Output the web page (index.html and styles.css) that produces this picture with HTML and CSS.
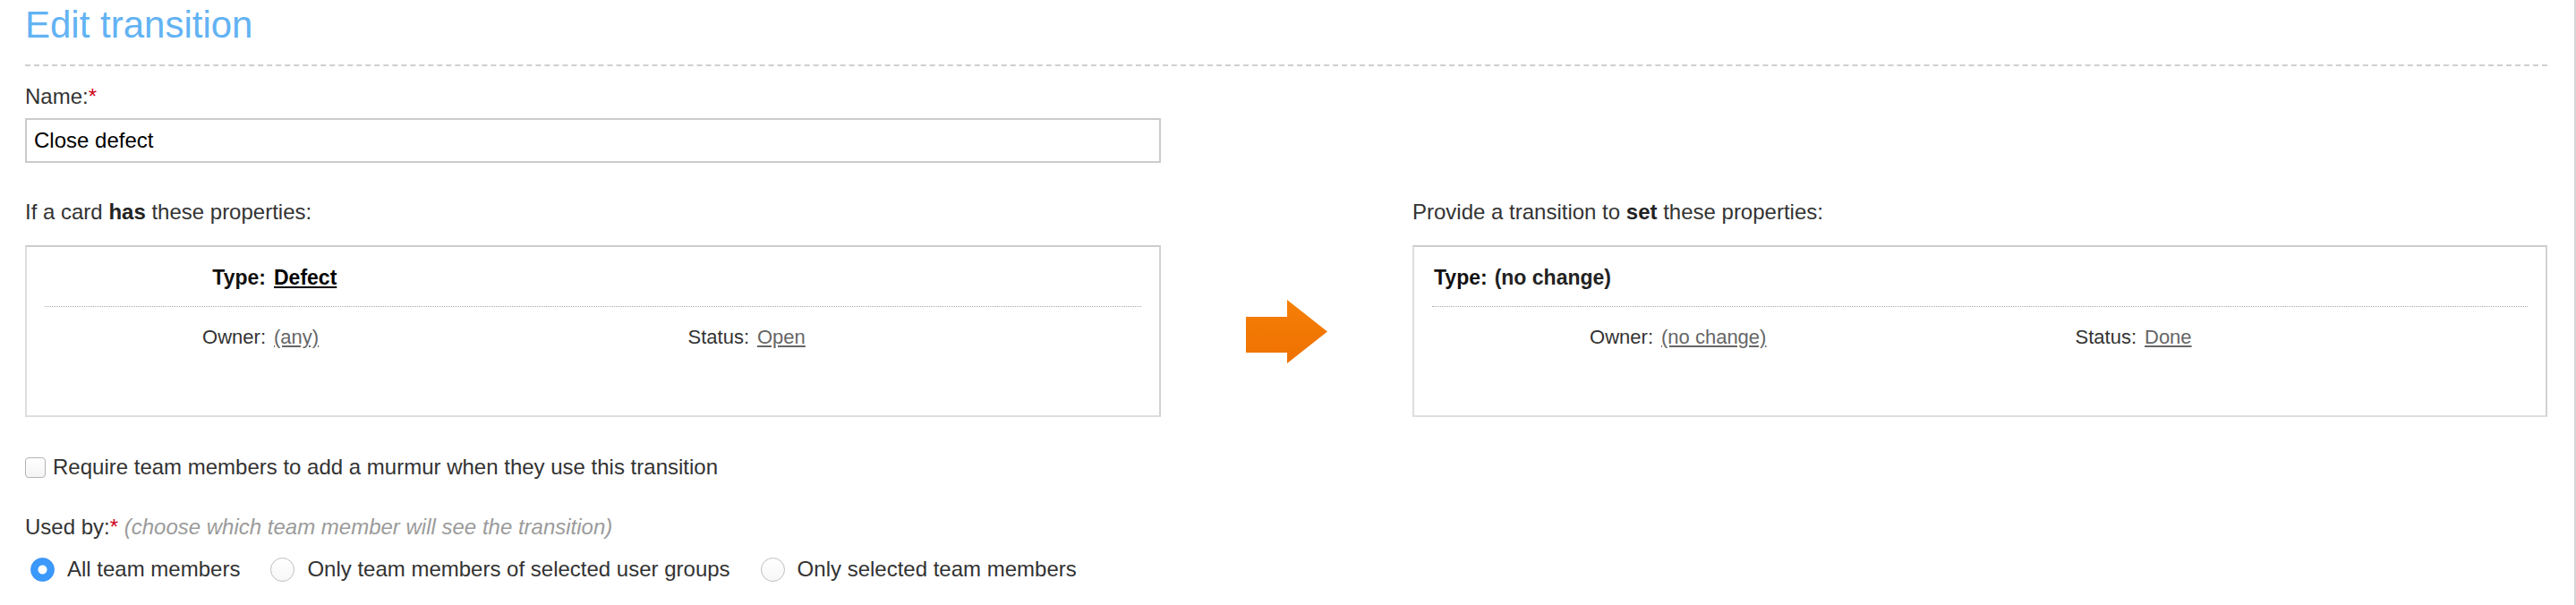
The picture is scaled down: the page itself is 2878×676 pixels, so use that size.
FILE: index.html
```html
<!DOCTYPE html>
<html lang="en">
<head>
<meta charset="utf-8">
<title>Edit transition</title>
<link rel="stylesheet" href="styles.css">
</head>
<body>
<div class="page">
  <h1 class="title">Edit transition</h1>
  <div class="rule"></div>

  <label class="field-label" for="name">Name:<span class="req">*</span></label>
  <input id="name" class="text-input" type="text" value="Close defect">

  <div class="transition">
    <div class="heading">If a card <b>has</b> these properties:</div>
    <div class="spacer"></div>
    <div class="heading">Provide a transition to <b>set</b> these properties:</div>

    <div class="props">
      <div class="prop-grid type-row">
        <span class="plabel type-label">Type:</span>
        <a class="type-value" href="#">Defect</a>
      </div>
      <div class="divider"></div>
      <div class="prop-grid prop-row">
        <span class="plabel">Owner:</span>
        <a class="pvalue" href="#">(any)</a>
        <span class="plabel">Status:</span>
        <a class="pvalue" href="#">Open</a>
      </div>
    </div>

    <div class="arrow">
      <svg width="91" height="71" viewBox="0 0 91 71" aria-hidden="true">
        <defs>
          <linearGradient id="ag" x1="0" y1="0" x2="0" y2="1">
            <stop offset="0" stop-color="#f67f08"/>
            <stop offset="1" stop-color="#ee7100"/>
          </linearGradient>
        </defs>
        <polygon points="0,19 46,19 46,0 91,35.5 46,71 46,59 0,59" fill="url(#ag)"/>
      </svg>
    </div>

    <div class="props">
      <div class="type-row type-row-to">
        <span class="type-label">Type:</span>
        <span class="type-none">(no change)</span>
      </div>
      <div class="divider"></div>
      <div class="prop-grid prop-row">
        <span class="plabel">Owner:</span>
        <a class="pvalue" href="#">(no change)</a>
        <span class="plabel">Status:</span>
        <a class="pvalue" href="#">Done</a>
      </div>
    </div>
  </div>

  <label class="check-row">
    <input class="checkbox" type="checkbox">
    <span>Require team members to add a murmur when they use this transition</span>
  </label>

  <div class="used-by">Used by:<span class="req">*</span> <span class="hint">(choose which team member will see the transition)</span></div>

  <div class="radio-row">
    <label class="radio-item"><input class="radio" type="radio" name="usedby" checked><span>All team members</span></label>
    <label class="radio-item"><input class="radio" type="radio" name="usedby"><span>Only team members of selected user groups</span></label>
    <label class="radio-item"><input class="radio" type="radio" name="usedby"><span>Only selected team members</span></label>
  </div>
</div>
</body>
</html>
```
FILE: styles.css
```css
html, body {
  margin: 0;
  padding: 0;
  background: #fff;
}

body {
  font-family: "Liberation Sans", Arial, Helvetica, sans-serif;
  color: #333;
}

.page {
  box-sizing: border-box;
  min-height: 676px;
  padding: 4px 30px 0 28px;
  border-right: 2px solid #d6d6d6;
}

.title {
  margin: 0;
  font-size: 42px;
  line-height: 48px;
  font-weight: 300;
  color: #62b3f3;
}

.rule {
  margin-top: 20px;
  border-top: 2px dashed #cfcfcf;
}

.field-label {
  display: block;
  margin-top: 20px;
  font-size: 24px;
  line-height: 28px;
  color: #333;
}

.req {
  color: #d0021b;
}

.text-input {
  display: block;
  box-sizing: border-box;
  margin: 10px 0 0 0;
  width: 1269px;
  height: 50px;
  padding: 0 8px;
  border: 2px solid #cbcbcb;
  border-radius: 0;
  font-family: "Liberation Sans", Arial, Helvetica, sans-serif;
  font-size: 24px;
  color: #000;
  outline: none;
  background: #fff;
}

.transition {
  margin-top: 41px;
  display: grid;
  grid-template-columns: 1269px 281px 1fr;
  row-gap: 23px;
}

.heading {
  font-size: 24px;
  line-height: 28px;
  color: #333;
}

.heading b {
  color: #222;
}

.props {
  box-sizing: border-box;
  height: 192px;
  padding: 20px 20px 0 20px;
  border: 2px solid #dedede;
  border-top-color: #cccccc;
  border-right-color: #d2d2d2;
}

.prop-grid {
  display: grid;
  grid-template-columns: 247px 262px 260px 1fr;
  column-gap: 9px;
  align-items: baseline;
}

.plabel {
  text-align: right;
}

.type-row {
  font-size: 23px;
  line-height: 28px;
  font-weight: bold;
  color: #111;
}

.type-row-to {
  display: flex;
  align-items: baseline;
  gap: 8px;
  padding-left: 2px;
}

.type-value {
  color: #000;
  text-decoration: underline;
}

.type-none {
  color: #222;
}

.divider {
  margin-top: 18px;
  border-top: 1px dotted #a6a6a6;
}

.prop-row {
  margin-top: 21px;
  font-size: 22px;
  line-height: 26px;
  color: #333;
}

.pvalue {
  color: #666;
  text-decoration: underline;
}

.arrow {
  align-self: center;
  justify-self: center;
  display: flex;
}

.check-row {
  margin-top: 42px;
  display: flex;
  align-items: center;
  gap: 8px;
  font-size: 24px;
  line-height: 28px;
  color: #333;
}

.checkbox {
  -webkit-appearance: none;
  appearance: none;
  box-sizing: border-box;
  margin: 0;
  width: 23px;
  height: 23px;
  border: 1px solid #b3b3b3;
  border-radius: 4px;
  background: linear-gradient(#ffffff, #f4f4f4);
}

.used-by {
  margin-top: 39px;
  font-size: 24px;
  line-height: 28px;
  color: #333;
}

.hint {
  font-style: italic;
  color: #9b9b9b;
}

.radio-row {
  margin-top: 19px;
  display: flex;
  align-items: center;
  font-size: 24px;
  line-height: 28px;
  color: #333;
}

.radio-item {
  display: flex;
  align-items: center;
  margin-right: 28px;
}

.radio {
  -webkit-appearance: none;
  appearance: none;
  box-sizing: border-box;
  margin: 0 14px 0 6px;
  width: 27px;
  height: 27px;
  border: 1px solid #bdbdbd;
  border-radius: 50%;
  background: linear-gradient(#ffffff, #f7f7f7);
}

.radio:checked {
  border-color: #3a8ff0;
  background: radial-gradient(circle, #ffffff 0 4.5px, #3b99fc 5.5px);
}
```
